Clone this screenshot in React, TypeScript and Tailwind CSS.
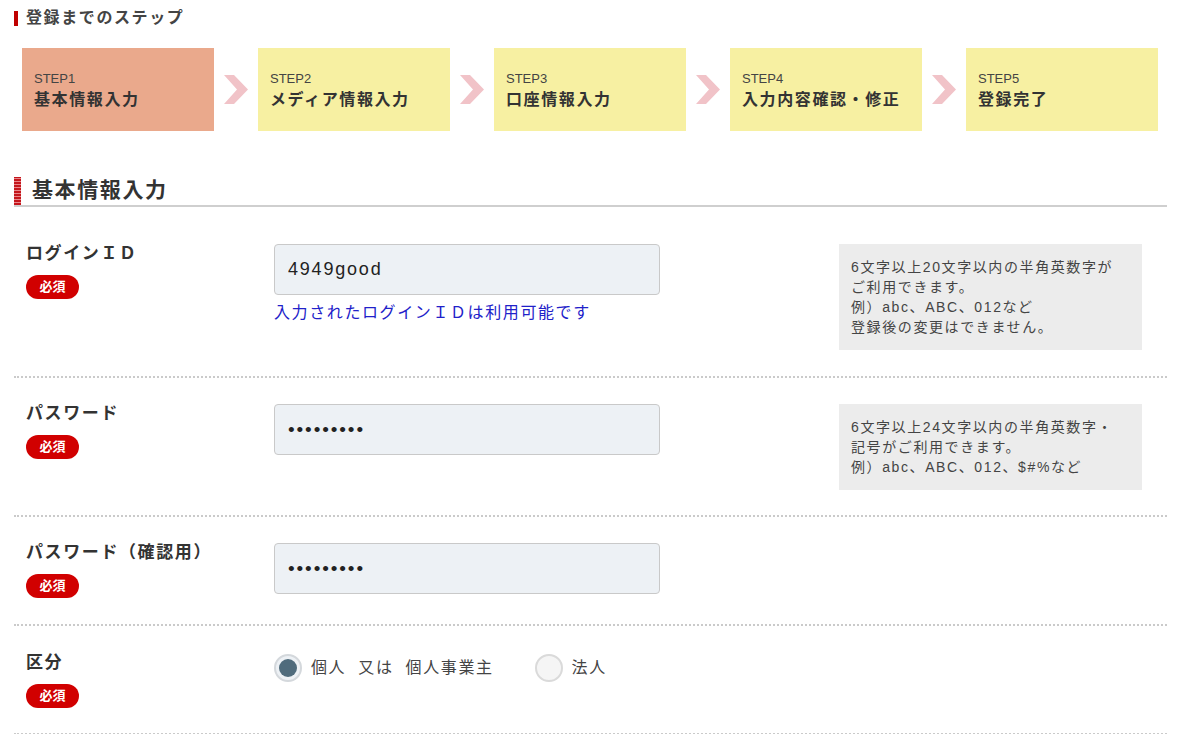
import React from 'react';

const steps = [
  { no: 'STEP1', title: '基本情報入力', active: true },
  { no: 'STEP2', title: 'メディア情報入力' },
  { no: 'STEP3', title: '口座情報入力' },
  { no: 'STEP4', title: '入力内容確認・修正' },
  { no: 'STEP5', title: '登録完了' },
];

function Arrow() {
  return (
    <svg width="24" height="29" viewBox="0 0 24 29" className="shrink-0">
      <polygon points="0,0 10,0 24,14.5 10,29 0,29 13,14.5" fill="#f1c3c8" />
    </svg>
  );
}

function Badge() {
  return (
    <div className="mt-[10px] w-[53px] h-[24px] rounded-full bg-[#d10000] text-white text-[13px] font-bold flex items-center justify-center tracking-normal">
      必須
    </div>
  );
}

function Label({ text }: { text: string }) {
  return (
    <div className="w-[248px] shrink-0">
      <div className="text-[17px] font-bold leading-[22px] -mt-[1px]">{text}</div>
      <Badge />
    </div>
  );
}

function Field({ value, password }: { value: string; password?: boolean }) {
  return (
    <input
      readOnly
      type={password ? 'password' : 'text'}
      value={value}
      className={
        (password ? 'text-[19px] ' : 'text-[18px] ') +
        'w-[386px] h-[51px] border border-[#c9c9c9] rounded-[4px] bg-[#edf1f5] px-[13px] text-[#222] tracking-[0.1em] outline-none'
      }
    />
  );
}

function Hint({ lines }: { lines: string[] }) {
  return (
    <div className="ml-[179px] w-[303px] bg-[#ececec] px-[12px] py-[13px] text-[14px] leading-[20px] text-[#444]">
      {lines.map((l) => (
        <div key={l}>{l}</div>
      ))}
    </div>
  );
}

function Radio({ checked, label }: { checked?: boolean; label: string }) {
  return (
    <div className="flex items-center gap-[9px]">
      <div
        className={
          checked
            ? 'w-[28px] h-[28px] rounded-full border-2 border-[#d4d8dc] bg-[#edf1f5] flex items-center justify-center'
            : 'w-[28px] h-[28px] rounded-full border-2 border-[#dadada] bg-[#f5f5f5]'
        }
      >
        {checked && <div className="w-[18px] h-[18px] rounded-full bg-[#4f6b7c]" />}
      </div>
      <span className="text-[16px] text-[#444] whitespace-pre">{label}</span>
    </div>
  );
}

export default function App() {
  const rowCls = 'flex pl-[12px] border-b-2 border-dotted border-[#cacaca]';

  return (
    <div className="min-h-screen bg-white text-[#333] tracking-[0.1em] font-['Liberation_Sans','Noto_Sans_CJK_JP',sans-serif]">
      <div className="pt-[8px] pl-[14px] flex items-center gap-[8px]">
        <div className="w-[4px] h-[15px] bg-[#c00000]" />
        <div className="text-[16px] font-bold leading-[20px] text-[#444]">登録までのステップ</div>
      </div>

      <div className="mt-[20px] ml-[22px] w-[1136px] flex items-center justify-between">
        {steps.map((s, i) => (
          <React.Fragment key={s.no}>
            {i > 0 && <Arrow />}
            <div
              className={
                (s.active ? 'bg-[#eaa98c] ' : 'bg-[#f7f0a2] ') +
                'w-[192px] h-[83px] pl-[12px] pt-[22px] flex flex-col'
              }
            >
              <div className="text-[13px] leading-[18px] text-[#444] tracking-normal">{s.no}</div>
              <div className="text-[16px] font-bold leading-[24px] text-[#333]">{s.title}</div>
            </div>
          </React.Fragment>
        ))}
      </div>

      <div className="ml-[14px] w-[1153px]">
        <div className="mt-[46px] flex items-stretch border-b-2 border-[#cfcfcf]">
          <div className="w-[7px] h-[28px] bg-[repeating-linear-gradient(0deg,#c4161c_0px,#c4161c_2px,#e9868a_2px,#e9868a_3px)]" />
          <div className="pl-[11px] text-[21px] font-bold leading-[26px] text-[#333]">基本情報入力</div>
        </div>

        <div className={rowCls + ' pt-[37px] pb-[26px]'}>
          <Label text="ログインＩＤ" />
          <div className="w-[386px] shrink-0">
            <Field value="4949good" />
            <div className="mt-[7px] text-[16px] leading-[22px] text-[#2121c9]">入力されたログインＩＤは利用可能です</div>
          </div>
          <Hint
            lines={[
              '6文字以上20文字以内の半角英数字が',
              'ご利用できます。',
              '例）abc、ABC、012など',
              '登録後の変更はできません。',
            ]}
          />
        </div>

        <div className={rowCls + ' pt-[26px] pb-[25px]'}>
          <Label text="パスワード" />
          <div className="w-[386px] shrink-0">
            <Field value="abcdefghi" password />
          </div>
          <Hint
            lines={[
              '6文字以上24文字以内の半角英数字・',
              '記号がご利用できます。',
              '例）abc、ABC、012、$#%など',
            ]}
          />
        </div>

        <div className={rowCls + ' pt-[26px] pb-[26px]'}>
          <Label text="パスワード（確認用）" />
          <div className="w-[386px] shrink-0">
            <Field value="abcdefghi" password />
          </div>
        </div>

        <div className={rowCls + ' pt-[27px] pb-[25px]'}>
          <Label text="区分" />
          <div className="h-[30px] flex items-center gap-[41px]">
            <Radio checked label="個人  又は  個人事業主" />
            <Radio label="法人" />
          </div>
        </div>
      </div>
    </div>
  );
}
